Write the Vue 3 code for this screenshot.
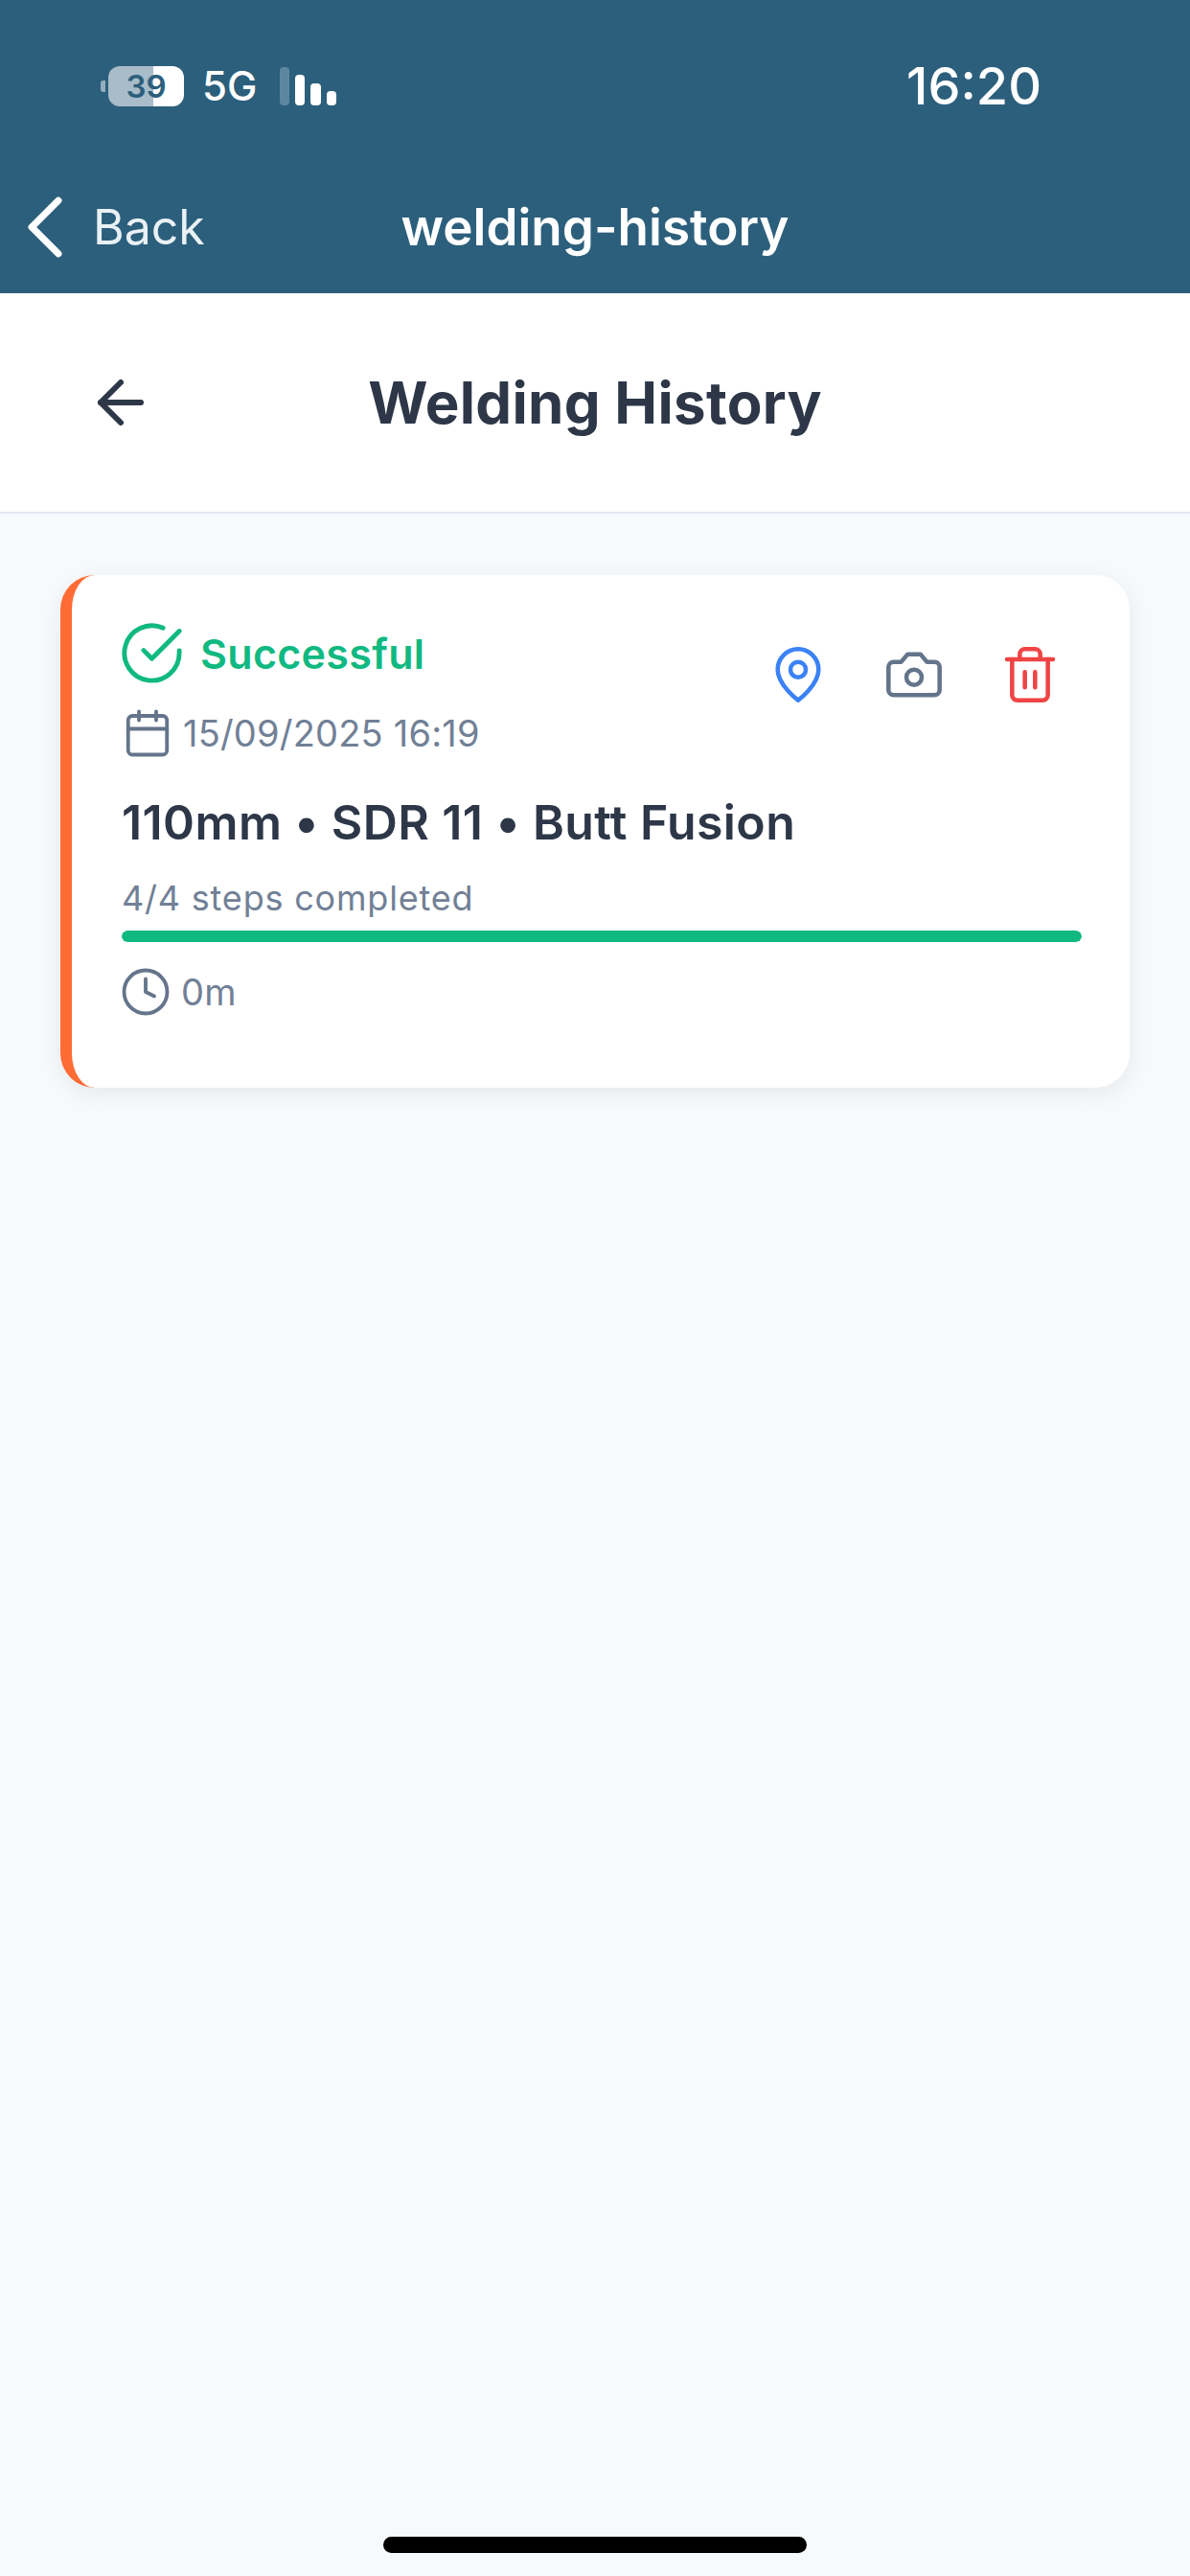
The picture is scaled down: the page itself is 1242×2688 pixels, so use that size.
<script setup>
const progress = 100
</script>

<template>
  <div class="page">
    <header class="topbar">
      <div class="status">
        <div class="status-left">
          <span class="nub"></span>
          <span class="battery">39</span>
          <span class="net">5G</span>
          <span class="signal">
            <i class="b0"></i><i class="b1"></i><i class="b2"></i><i class="b3"></i>
          </span>
        </div>
        <span class="time">16:20</span>
      </div>
      <nav class="nav">
        <div class="back">
          <svg class="chev" viewBox="0 0 36 62" fill="none" stroke="#fff" stroke-width="7" stroke-linecap="round" stroke-linejoin="round">
            <path d="M32 4 5 31l27 27" />
          </svg>
          <span>Back</span>
        </div>
        <span class="nav-title">welding-history</span>
        <span></span>
      </nav>
    </header>

    <section class="page-head">
      <svg class="arrow" viewBox="0 0 24 24" fill="none" stroke="#2d3748" stroke-width="2" stroke-linecap="round" stroke-linejoin="round">
        <path d="m12 19-7-7 7-7" /><path d="M19 12H5" />
      </svg>
      <h1>Welding History</h1>
    </section>

    <main class="content">
      <article class="card">
        <div class="card-top">
          <div class="card-meta">
            <div class="state">
              <svg class="check" viewBox="1 1 22 22" fill="none" stroke="#10b981" stroke-width="1.7" stroke-linecap="round" stroke-linejoin="round">
                <path d="M22 11.08V12a10 10 0 1 1-5.93-9.14" /><path d="m9 11 3 3L22 4" />
              </svg>
              <span>Successful</span>
            </div>
            <div class="line date">
              <svg class="small" viewBox="0 0 24 24" fill="none" stroke="#64748b" stroke-width="1.7" stroke-linecap="round" stroke-linejoin="round">
                <path d="M8 2v4" /><path d="M16 2v4" /><rect x="3" y="4" width="18" height="18" rx="2" /><path d="M3 10h18" />
              </svg>
              <span>15/09/2025 16:19</span>
            </div>
          </div>
          <div class="actions">
            <svg class="act" viewBox="0 0 24 24" fill="none" stroke="#3b82f6" stroke-width="1.7" stroke-linecap="round" stroke-linejoin="round">
              <path d="M20 10c0 6-8 12-8 12s-8-6-8-12a8 8 0 0 1 16 0Z" /><circle cx="12" cy="10" r="3" />
            </svg>
            <svg class="act" viewBox="0 0 24 24" fill="none" stroke="#64748b" stroke-width="1.7" stroke-linecap="round" stroke-linejoin="round">
              <path d="M14.5 4h-5L7 7H4a2 2 0 0 0-2 2v9a2 2 0 0 0 2 2h16a2 2 0 0 0 2-2V9a2 2 0 0 0-2-2h-3l-2.5-3z" /><circle cx="12" cy="13" r="3" />
            </svg>
            <svg class="act" viewBox="0 0 24 24" fill="none" stroke="#ef4444" stroke-width="1.7" stroke-linecap="round" stroke-linejoin="round">
              <path d="M3 6h18" /><path d="M19 6v14a2 2 0 0 1-2 2H7a2 2 0 0 1-2-2V6" /><path d="M8 6V4a2 2 0 0 1 2-2h4a2 2 0 0 1 2 2v2" /><path d="M10 11v6" /><path d="M14 11v6" />
            </svg>
          </div>
        </div>
        <h2>110mm • SDR 11 • Butt Fusion</h2>
        <p class="steps">4/4 steps completed</p>
        <div class="track"><div class="fill" :style="{ width: progress + '%' }"></div></div>
        <div class="line duration">
          <svg class="small" viewBox="0 0 24 24" fill="none" stroke="#64748b" stroke-width="1.7" stroke-linecap="round" stroke-linejoin="round">
            <circle cx="12" cy="12" r="10" /><path d="M12 6v6l4 2" />
          </svg>
          <span>0m</span>
        </div>
      </article>
    </main>

    <div class="home-wrap"><div class="home"></div></div>
  </div>
</template>

<style scoped>
.page {
  width: 1242px;
  height: 2688px;
  display: flex;
  flex-direction: column;
  background: #f7fafc;
  font-family: Inter, "Liberation Sans", sans-serif;
  overflow: hidden;
}
.topbar {
  height: 306px;
  flex: none;
  background: #2c5f7c;
  color: #fff;
  display: flex;
  flex-direction: column;
}
.status {
  display: flex;
  justify-content: space-between;
  align-items: center;
  height: 42px;
  margin-top: 69px;
  padding: 0 155px 0 105px;
}
.status-left {
  display: flex;
  align-items: center;
}
.nub {
  width: 5px;
  height: 12px;
  margin-right: 3px;
  border-radius: 3px 0 0 3px;
  background: rgba(255, 255, 255, 0.5);
}
.battery {
  width: 79px;
  height: 42px;
  border-radius: 12px;
  background: linear-gradient(90deg, #a9bcc9 0 59.5%, #fff 59.5% 100%);
  color: #2c5f7c;
  font-size: 33px;
  font-weight: 600;
  line-height: 42px;
  text-align: center;
}
.net {
  width: 55px;
  margin-left: 19px;
  font-size: 42px;
  font-weight: 500;
  line-height: 42px;
  white-space: nowrap;
}
.signal {
  display: flex;
  align-items: flex-end;
  gap: 6px;
  height: 40px;
  margin-left: 26px;
}
.signal i {
  display: block;
  width: 10px;
  border-radius: 4px;
  background: #fff;
}
.signal .b0 { height: 40px; background: #5d87a0; }
.signal .b1 { height: 32px; }
.signal .b2 { height: 23px; width: 11px; }
.signal .b3 { height: 15px; }
.time {
  font-size: 54px;
  font-weight: 500;
  line-height: 42px;
}
.nav {
  display: grid;
  grid-template-columns: 1fr auto 1fr;
  align-items: center;
  height: 66px;
  margin-top: 93px;
  padding: 0 28px;
}
.back {
  display: flex;
  align-items: center;
  gap: 32px;
  font-size: 50px;
  color: #eaf1f5;
}
.chev {
  width: 37px;
  height: 64px;
}
.nav-title {
  font-size: 53px;
  font-weight: 600;
}
.page-head {
  height: 228px;
  flex: none;
  position: relative;
  display: flex;
  justify-content: center;
  align-items: center;
  background: #fff;
  border-bottom: 2px solid #e2e8f0;
  box-sizing: content-box;
}
.arrow {
  position: absolute;
  left: 90px;
  top: 50%;
  width: 72px;
  height: 72px;
  margin-top: -36px;
}
h1 {
  margin: 0;
  font-size: 60px;
  font-weight: 700;
  letter-spacing: 0.3px;
  color: #2d3748;
}
.content {
  flex: 1;
  padding: 64px 63px 0;
}
.card {
  height: 535px;
  box-sizing: border-box;
  padding: 50px 50px 0 52px;
  background: #fff;
  border-left: 12px solid #ff6b35;
  border-radius: 36px;
  box-shadow: 0 6px 24px rgba(0, 0, 0, 0.07);
}
.card-top {
  display: flex;
  justify-content: space-between;
  align-items: flex-start;
}
.state {
  display: flex;
  align-items: center;
  gap: 19px;
  height: 63px;
  font-size: 43px;
  font-weight: 600;
  letter-spacing: 0.3px;
  color: #10b981;
}
.check {
  width: 63px;
  height: 63px;
}
.line {
  display: flex;
  align-items: center;
  gap: 10px;
  height: 54px;
  font-size: 38px;
  letter-spacing: 0.2px;
  color: #718096;
}
.date {
  margin-top: 25px;
}
.small {
  width: 54px;
  height: 54px;
}
.actions {
  display: flex;
  gap: 57px;
  margin-top: 22px;
  margin-right: 22px;
}
.act {
  width: 64px;
  height: 64px;
}
h2 {
  margin: 36px 0 0;
  font-size: 50px;
  line-height: 60px;
  font-weight: 600;
  letter-spacing: 0.4px;
  color: #2d3748;
}
.steps {
  margin: 26px 0 0;
  font-size: 36px;
  line-height: 46px;
  letter-spacing: 0.8px;
  color: #718096;
}
.track {
  height: 12px;
  margin-top: 11px;
  border-radius: 6px;
  background: #e2e8f0;
  overflow: hidden;
}
.fill {
  height: 100%;
  background: #10b981;
  border-radius: 6px;
}
.duration {
  margin-top: 25px;
}
.duration .small {
  margin-left: -2px;
}
.home-wrap {
  flex: none;
  height: 41px;
  display: flex;
  justify-content: center;
}
.home {
  width: 442px;
  height: 17px;
  border-radius: 8.5px;
  background: #000;
}
</style>
